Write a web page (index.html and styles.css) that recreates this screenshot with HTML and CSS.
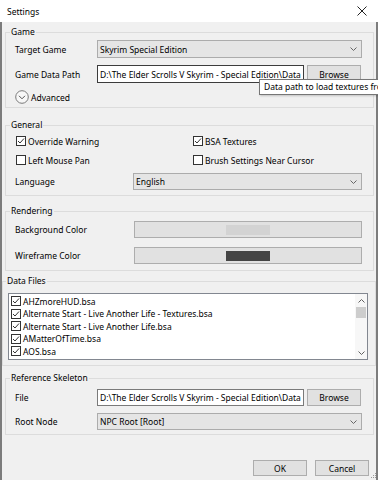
FILE: index.html
```html
<!DOCTYPE html>
<html>
<head>
  <link rel="stylesheet" href="styles.css">
</head>
<body>
  <div class="window">
    <div class="titlebar">
      <span>Settings</span>
      <svg class="close" width="10" height="10" viewBox="0 0 10 10">
        <path d="M0.5 0.5 L9.5 9.5 M9.5 0.5 L0.5 9.5" stroke="#222" stroke-width="1" fill="none"/>
      </svg>
    </div>

    <div class="client">
      <fieldset class="group game">
        <legend>Game</legend>
        <div class="stack">
          <div class="row">
            <span class="label">Target Game</span>
            <div class="combo">
              <span>Skyrim Special Edition</span>
              <svg width="7" height="4" viewBox="0 0 7 4"><path d="M0.5 0.5 L3.5 3.5 L6.5 0.5" stroke="#666" fill="none"/></svg>
            </div>
          </div>
          <div class="row">
            <span class="label">Game Data Path</span>
            <div class="textbox active">D:\The Elder Scrolls V Skyrim - Special Edition\Data</div>
            <button class="btn">Browse</button>
          </div>
          <div class="row adv">
            <svg width="14" height="14" viewBox="0 0 14 14">
              <circle cx="7" cy="7" r="6.3" stroke="#7a7a7a" fill="#f7f7f7"/>
              <path d="M4 5.8 L7 8.8 L10 5.8" stroke="#555" fill="none"/>
            </svg>
            <span>Advanced</span>
          </div>
        </div>
      </fieldset>

      <fieldset class="group general">
        <legend>General</legend>
        <div class="stack">
          <div class="checks">
            <div class="check"><span class="box on"><svg width="8" height="8" viewBox="0 0 8 8"><path d="M1 4 L3 6 L7 1.5" stroke="#333" fill="none"/></svg></span>Override Warning</div>
            <div class="check"><span class="box on"><svg width="8" height="8" viewBox="0 0 8 8"><path d="M1 4 L3 6 L7 1.5" stroke="#333" fill="none"/></svg></span>BSA Textures</div>
            <div class="check"><span class="box"></span>Left Mouse Pan</div>
            <div class="check"><span class="box"></span>Brush Settings Near Cursor</div>
          </div>
          <div class="row short">
            <span class="label wide">Language</span>
            <div class="combo">
              <span>English</span>
              <svg width="7" height="4" viewBox="0 0 7 4"><path d="M0.5 0.5 L3.5 3.5 L6.5 0.5" stroke="#666" fill="none"/></svg>
            </div>
          </div>
        </div>
      </fieldset>

      <fieldset class="group rendering">
        <legend>Rendering</legend>
        <div class="stack loose">
          <div class="row short">
            <span class="label wider">Background Color</span>
            <div class="colorbtn"><span class="swatch light"></span></div>
          </div>
          <div class="row short">
            <span class="label wider">Wireframe Color</span>
            <div class="colorbtn"><span class="swatch dark"></span></div>
          </div>
        </div>
      </fieldset>

      <fieldset class="group files">
        <legend>Data Files</legend>
        <div class="list">
          <div class="items">
            <div class="item"><span class="box on"><svg width="8" height="8" viewBox="0 0 8 8"><path d="M1 4 L3 6 L7 1.5" stroke="#333" fill="none"/></svg></span>AHZmoreHUD.bsa</div>
            <div class="item"><span class="box on"><svg width="8" height="8" viewBox="0 0 8 8"><path d="M1 4 L3 6 L7 1.5" stroke="#333" fill="none"/></svg></span>Alternate Start - Live Another Life - Textures.bsa</div>
            <div class="item"><span class="box on"><svg width="8" height="8" viewBox="0 0 8 8"><path d="M1 4 L3 6 L7 1.5" stroke="#333" fill="none"/></svg></span>Alternate Start - Live Another Life.bsa</div>
            <div class="item"><span class="box on"><svg width="8" height="8" viewBox="0 0 8 8"><path d="M1 4 L3 6 L7 1.5" stroke="#333" fill="none"/></svg></span>AMatterOfTime.bsa</div>
            <div class="item"><span class="box on"><svg width="8" height="8" viewBox="0 0 8 8"><path d="M1 4 L3 6 L7 1.5" stroke="#333" fill="none"/></svg></span>AOS.bsa</div>
            <div class="item"><span class="box on"></span></div>
          </div>
          <div class="scrollbar">
            <div class="arrow"><svg width="7" height="4" viewBox="0 0 7 4"><path d="M0.5 3.5 L3.5 0.5 L6.5 3.5" stroke="#606060" fill="none"/></svg></div>
            <div class="thumb"></div>
            <div class="track"></div>
            <div class="arrow"><svg width="7" height="4" viewBox="0 0 7 4"><path d="M0.5 0.5 L3.5 3.5 L6.5 0.5" stroke="#606060" fill="none"/></svg></div>
          </div>
        </div>
      </fieldset>

      <fieldset class="group skeleton">
        <legend>Reference Skeleton</legend>
        <div class="stack">
          <div class="row short">
            <span class="label">File</span>
            <div class="textbox">D:\The Elder Scrolls V Skyrim - Special Edition\Data</div>
            <button class="btn">Browse</button>
          </div>
          <div class="row short">
            <span class="label">Root Node</span>
            <div class="combo">
              <span>NPC Root [Root]</span>
              <svg width="7" height="4" viewBox="0 0 7 4"><path d="M0.5 0.5 L3.5 3.5 L6.5 0.5" stroke="#666" fill="none"/></svg>
            </div>
          </div>
        </div>
      </fieldset>

      <div class="footer">
        <button class="btn">OK</button>
        <button class="btn">Cancel</button>
      </div>
    </div>

    <div class="tooltip">Data path to load textures from the game</div>

    <svg class="grip" width="7" height="7" viewBox="0 0 7 7">
      <rect x="5" y="1" width="1" height="1" fill="#999"/>
      <rect x="3" y="3" width="1" height="1" fill="#999"/>
      <rect x="5" y="3" width="1" height="1" fill="#999"/>
      <rect x="1" y="5" width="1" height="1" fill="#999"/>
      <rect x="3" y="5" width="1" height="1" fill="#999"/>
      <rect x="5" y="5" width="1" height="1" fill="#999"/>
    </svg>
  </div>
</body>
</html>
```

FILE: styles.css
```css
body {
  margin: 0;
  font-family: "Noto Sans", "Liberation Sans", sans-serif;
  font-size: 8.5px;
  color: #000;
}

.window {
  position: relative;
  width: 378px;
  height: 480px;
  background: #f0f0f0;
  overflow: hidden;
  display: flex;
  flex-direction: column;
}

.titlebar {
  height: 22px;
  flex: none;
  background: #fff;
  display: flex;
  align-items: center;
  justify-content: space-between;
  padding: 0 11px 0 7px;
}

.client {
  flex: 1;
  border-left: 2px solid #7c7c7c;
  border-right: 2px solid #7c7c7c;
  display: flex;
  flex-direction: column;
}

/* group boxes */
.group {
  margin: 0 2px 0 3px;
  padding: 2px 11px 3px 9px;
  border: 1px solid #dcdcdc;
  min-width: 0;
}

.group legend {
  padding: 0 1px;
  margin-left: -5px;
  line-height: 12px;
  height: 12px;
}

.game { margin-top: 4px; }
.general { margin-top: 11px; padding-top: 4px; padding-bottom: 5px; }
.rendering { margin-top: 9px; padding-top: 4px; padding-bottom: 6px; }
.skeleton { margin-top: 6px; padding-top: 5px; padding-bottom: 4px; }

.files {
  margin: 4px 0 0 0;
  padding: 6px 7px 5px 5px;
}

.files legend {
  margin-left: -2px;
}

.stack {
  display: flex;
  flex-direction: column;
  gap: 7px;
}

.stack.loose {
  gap: 9px;
}

.row {
  display: flex;
  align-items: center;
  height: 18px;
}

.row.short {
  height: 17px;
}

.label {
  width: 82px;
  flex: none;
}

.label.wide { width: 118px; }
.label.wider { width: 119px; }

.combo {
  flex: 1;
  height: 100%;
  box-sizing: border-box;
  background: #e5e5e5;
  border: 1px solid #acacac;
  display: flex;
  align-items: center;
  justify-content: space-between;
  padding: 0 4px 0 2px;
}

.textbox {
  width: 207px;
  height: 100%;
  box-sizing: border-box;
  background: #fff;
  border: 1px solid #7a7a7a;
  padding-left: 2px;
  white-space: nowrap;
  overflow: hidden;
  display: flex;
  align-items: center;
}

.textbox.active {
  border-color: #3c3c3c;
}

.btn {
  width: 54px;
  height: 100%;
  box-sizing: border-box;
  margin-left: 3px;
  padding: 0;
  background: #e1e1e1;
  border: 1px solid #adadad;
  font: inherit;
  color: #000;
}

.adv {
  height: 14px;
}

.adv svg {
  margin-right: 2px;
}

/* checkboxes */
.checks {
  display: grid;
  grid-template-columns: 177px 1fr;
  row-gap: 7px;
}

.check {
  height: 12px;
  display: flex;
  align-items: center;
  padding-left: 1px;
}

.box {
  width: 10px;
  height: 10px;
  box-sizing: border-box;
  border: 1px solid #333;
  background: #fff;
  margin-right: 2px;
  flex: none;
  display: flex;
  align-items: center;
  justify-content: center;
}

/* colour pickers */
.colorbtn {
  flex: 1;
  height: 100%;
  box-sizing: border-box;
  background: #e1e1e1;
  border: 1px solid #adadad;
  display: flex;
  align-items: center;
  justify-content: center;
}

.swatch {
  width: 44px;
  height: 10px;
}

.swatch.light { background: #d3d3d3; }
.swatch.dark { background: #444; }

/* data file list */
.list {
  height: 67px;
  box-sizing: border-box;
  background: #fff;
  border: 1px solid #828790;
  display: flex;
}

.items {
  flex: 1;
  padding: 1px 0 0 2px;
  overflow: hidden;
}

.item {
  height: 12.5px;
  display: flex;
  align-items: center;
  white-space: nowrap;
}

.scrollbar {
  width: 12px;
  display: flex;
  flex-direction: column;
  background: #f7f7f7;
}

.arrow {
  height: 13px;
  display: flex;
  align-items: center;
  justify-content: center;
}

.thumb {
  height: 11px;
  margin: 0 1px;
  background: #cdcdcd;
}

.track {
  flex: 1;
}

/* dialog buttons */
.footer {
  margin-top: 25px;
  height: 16px;
  display: flex;
  justify-content: flex-end;
  gap: 5px;
  padding-right: 7px;
}

.tooltip {
  position: absolute;
  left: 259px;
  top: 79px;
  height: 16px;
  width: 150px;
  box-sizing: border-box;
  padding-left: 4px;
  line-height: 14px;
  white-space: nowrap;
  background: #fff;
  border: 1px solid #767676;
  box-shadow: 1px 1px 2px rgba(0, 0, 0, 0.2);
}

.grip {
  position: absolute;
  right: 1px;
  bottom: 1px;
}
```
